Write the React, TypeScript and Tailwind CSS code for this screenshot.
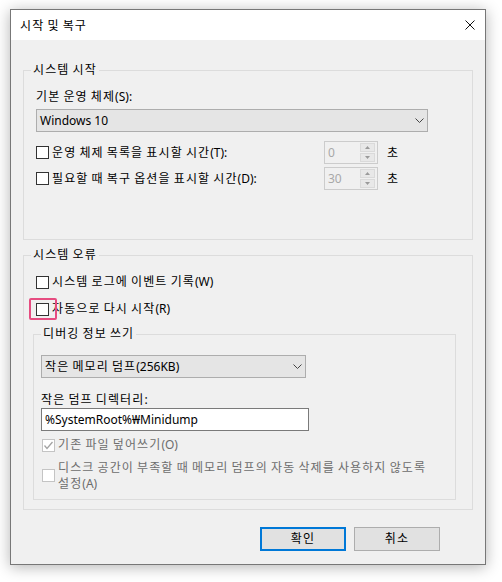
import React from "react";

function K({ children }: { children: string }) {
  const parts = children.split(/([\uAC00-\uD7A3]+)/);
  return (
    <>
      {parts.map((p, i) =>
        /[\uAC00-\uD7A3]/.test(p) ? (
          <span key={i} className="tracking-[1.1px]">
            {p}
          </span>
        ) : (
          <React.Fragment key={i}>{p}</React.Fragment>
        )
      )}
    </>
  );
}

function Box({ disabled, checked }: { disabled?: boolean; checked?: boolean }) {
  return (
    <span
      className={
        disabled
          ? "flex h-[13px] w-[13px] shrink-0 items-center justify-center border border-[#c4c4c4] bg-white"
          : "flex h-[13px] w-[13px] shrink-0 items-center justify-center border border-[#333333] bg-white"
      }
    >
      {checked && (
        <svg width="11" height="11" viewBox="0 0 11 11">
          <path d="M1.5 5.5 L4 8.5 L9.5 2" fill="none" stroke="#a3a3a3" strokeWidth="1.3" />
        </svg>
      )}
    </span>
  );
}

function Group({
  label,
  children,
  className,
  bodyClassName,
}: {
  label: string;
  children: React.ReactNode;
  className?: string;
  bodyClassName?: string;
}) {
  return (
    <div className={className}>
      <div className="flex h-4">
        <div className="mt-2 w-[8px] border-l border-t border-[#dcdcdc]" />
        <span className="px-[2px] leading-4">
          <K>{label}</K>
        </span>
        <div className="mt-2 flex-1 border-r border-t border-[#dcdcdc]" />
      </div>
      <div className={"border-x border-b border-[#dcdcdc] " + (bodyClassName ?? "")}>{children}</div>
    </div>
  );
}

function Chevron() {
  return (
    <svg width="9" height="5" viewBox="0 0 9 5" className="shrink-0">
      <path d="M0.5 0.5 L4.5 4.5 L8.5 0.5" fill="none" stroke="#444444" strokeWidth="1" />
    </svg>
  );
}

function Combo({ text, widthClass }: { text: string; widthClass: string }) {
  return (
    <div
      className={
        "flex h-[23px] items-center justify-between border border-[#adadad] bg-[#e5e5e5] pl-[3px] pr-[3px] " +
        widthClass
      }
    >
      <span className="leading-4">
        <K>{text}</K>
      </span>
      <Chevron />
    </div>
  );
}

function Spin({ value }: { value: string }) {
  return (
    <div className="flex h-[23px] w-[54px] border border-[#cccccc] bg-[#f0f0f0] py-[1px] pr-[2px]">
      <span className="flex-1 pl-[3px] leading-[19px] text-[#a8a8a8]">{value}</span>
      <div className="flex w-[15px] flex-col gap-[1px]">
        <div className="flex flex-1 items-center justify-center border border-[#dadada] bg-[#e8e8e8]">
          <svg width="5" height="3" viewBox="0 0 5 3">
            <path d="M0 3 L2.5 0 L5 3 Z" fill="#9a9a9a" />
          </svg>
        </div>
        <div className="flex flex-1 items-center justify-center border border-[#dadada] bg-[#e8e8e8]">
          <svg width="5" height="3" viewBox="0 0 5 3">
            <path d="M0 0 L2.5 3 L5 0 Z" fill="#9a9a9a" />
          </svg>
        </div>
      </div>
    </div>
  );
}

function TimeRow({ label, value, className }: { label: string; value: string; className?: string }) {
  return (
    <div className={"flex h-[23px] items-center " + (className ?? "")}>
      <div className="flex w-[288px] items-center">
        <Box />
        <span className="ml-[3px] leading-4">
          <K>{label}</K>
        </span>
      </div>
      <Spin value={value} />
      <span className="ml-[9px] leading-4">
        <K>초</K>
      </span>
    </div>
  );
}

export default function App() {
  return (
    <div className="min-h-[582px] w-[502px] bg-white pl-[10px] pt-[9px] font-['Noto_Sans','Noto_Sans_CJK_KR',sans-serif] text-[12px] leading-4 text-black">
      <div className="w-[476px] border border-[#777777] bg-[#f0f0f0] shadow-[0_2px_14px_rgba(0,0,0,0.3)]">
        <div className="flex h-[30px] items-center justify-between bg-white pl-[9px] pr-[10px]">
          <span className="pt-[1px] leading-4">
            <K>시작 및 복구</K>
          </span>
          <svg width="10" height="10" viewBox="0 0 10 10">
            <path d="M0.5 0.5 L9.5 9.5 M9.5 0.5 L0.5 9.5" stroke="#111111" strokeWidth="1" fill="none" />
          </svg>
        </div>

        <div className="px-[12px] pb-[13px] pt-[22px]">
          <Group label="시스템 시작" bodyClassName="pl-[12px] pt-[11px] pb-[49px]">
            <div className="leading-4">
              <K>기본 운영 체제(S):</K>
            </div>
            <Combo text="Windows 10" widthClass="mt-[4px] w-[392px]" />
            <TimeRow label="운영 체제 목록을 표시할 시간(T):" value="0" className="mt-[9px]" />
            <TimeRow label="필요할 때 복구 옵션을 표시할 시간(D):" value="30" className="mt-[3px]" />
          </Group>

          <Group label="시스템 오류" className="mt-[7px]" bodyClassName="pl-[9px] pt-[11px] pb-[9px]">
            <div className="flex h-4 items-center pl-[3px]">
              <Box />
              <span className="ml-[3px]">
                <K>시스템 로그에 이벤트 기록(W)</K>
              </span>
            </div>
            <div className="mt-[11px] flex h-4 items-center pl-[3px]">
              <span className="relative">
                <Box />
                <span className="absolute left-[-7px] top-[-5px] h-[22px] w-[28px] rounded-[2px] border-2 border-[#e64c80]" />
              </span>
              <span className="ml-[3px]">
                <K>자동으로 다시 시작(R)</K>
              </span>
            </div>

            <Group label="디버깅 정보 쓰기" className="mt-[9px] w-[423px]" bodyClassName="pl-[7px] pt-[13px] pb-[8px]">
              <Combo text="작은 메모리 덤프(256KB)" widthClass="w-[265px]" />
              <div className="mt-[14px] leading-4">
                <K>작은 덤프 디렉터리:</K>
              </div>
              <div className="flex h-[23px] w-[268px] items-center border border-[#7a7a7a] bg-white pl-[3px]">
                <span className="leading-4">%SystemRoot%₩Minidump</span>
              </div>
              <div className="mt-[6px] flex h-4 items-center pl-[1px] text-[#6d6d6d]">
                <Box disabled checked />
                <span className="ml-[3px]">
                  <K>기존 파일 덮어쓰기(O)</K>
                </span>
              </div>
              <div className="mt-[7px] flex items-center pl-[1px] text-[#6d6d6d]">
                <Box disabled />
                <span className="ml-[3px] leading-[15.5px]">
                  <K>디스크 공간이 부족할 때 메모리 덤프의 자동 삭제를 사용하지 않도록</K>
                  <br />
                  <K>설정(A)</K>
                </span>
              </div>
            </Group>
          </Group>

          <div className="mt-[17px] flex justify-end gap-[8px] pr-[33px]">
            <button className="flex h-[24px] w-[86px] items-center justify-center border-2 border-[#0078d7] bg-[#e1e1e1] leading-4">
              <K>확인</K>
            </button>
            <button className="flex h-[24px] w-[86px] items-center justify-center border border-[#adadad] bg-[#e1e1e1] leading-4">
              <K>취소</K>
            </button>
          </div>
        </div>
      </div>
    </div>
  );
}
